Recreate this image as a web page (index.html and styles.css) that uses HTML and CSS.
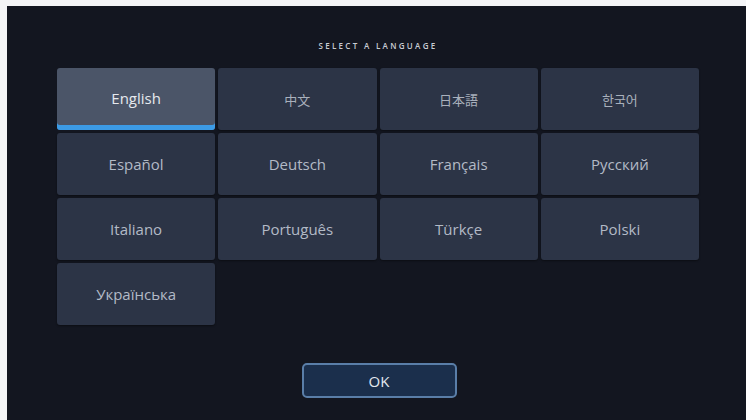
FILE: index.html
```html
<!DOCTYPE html>
<html lang="en">
<head>
    <meta charset="UTF-8">
    <meta name="viewport" content="width=device-width, initial-scale=1.0">
    <title>Select a Language</title>
    <link rel="stylesheet" href="styles.css">
</head>
<body>

<div class="screen">
    <h1 class="title">Select a Language</h1>

    <div class="lang-grid">
        <button class="lang active">English</button>
        <button class="lang cjk" lang="zh">中文</button>
        <button class="lang cjk" lang="ja">日本語</button>
        <button class="lang cjk" lang="ko">한국어</button>
        <button class="lang">Español</button>
        <button class="lang">Deutsch</button>
        <button class="lang">Français</button>
        <button class="lang">Русский</button>
        <button class="lang">Italiano</button>
        <button class="lang">Português</button>
        <button class="lang">Türkçe</button>
        <button class="lang">Polski</button>
        <button class="lang">Українська</button>
    </div>

    <div class="actions">
        <button class="ok-btn">OK</button>
    </div>
</div>

</body>
</html>
```

FILE: styles.css
```css
body {
    margin: 0;
    background: #f4f5f7;
    font-family: 'Open Sans', 'Noto Sans CJK SC', 'Noto Sans CJK KR', sans-serif;
}

.screen {
    margin: 6px 0 0 7px;
    height: 414px;
    padding: 0 47px 0 50px;
    background: #131620;
    box-sizing: border-box;
    overflow: hidden;
}

.title {
    margin: 0;
    padding-top: 35px;
    height: 10px;
    line-height: 10px;
    font-size: 8px;
    font-weight: 600;
    letter-spacing: 2.3px;
    text-transform: uppercase;
    text-align: center;
    color: #c8ccd3;
    box-sizing: content-box;
}

.lang-grid {
    margin-top: 17px;
    display: grid;
    grid-template-columns: repeat(4, 1fr);
    grid-auto-rows: 62px;
    gap: 3px;
}

.lang {
    border: none;
    border-radius: 3px;
    background: #2c3446;
    color: #b3bac6;
    font-family: inherit;
    font-size: 15px;
    padding: 0;
    box-shadow: 0 1px 2px rgba(0, 0, 0, 0.4);
}

.lang.cjk {
    font-size: 13px;
    color: #a9b0bc;
}

.lang.active {
    background: #4b5568;
    color: #e6e9ee;
    box-shadow: inset 0 -5px 0 #3c9be6;
    padding-bottom: 2px;
}

.actions {
    display: flex;
    justify-content: center;
    margin-top: 38px;
    padding-left: 2px;
}

.ok-btn {
    width: 155px;
    height: 35px;
    border: 2px solid #5a7ea8;
    border-radius: 5px;
    background: #1b2f4c;
    color: #e3e8ef;
    font-family: inherit;
    font-size: 15px;
    font-weight: 400;
}
```
